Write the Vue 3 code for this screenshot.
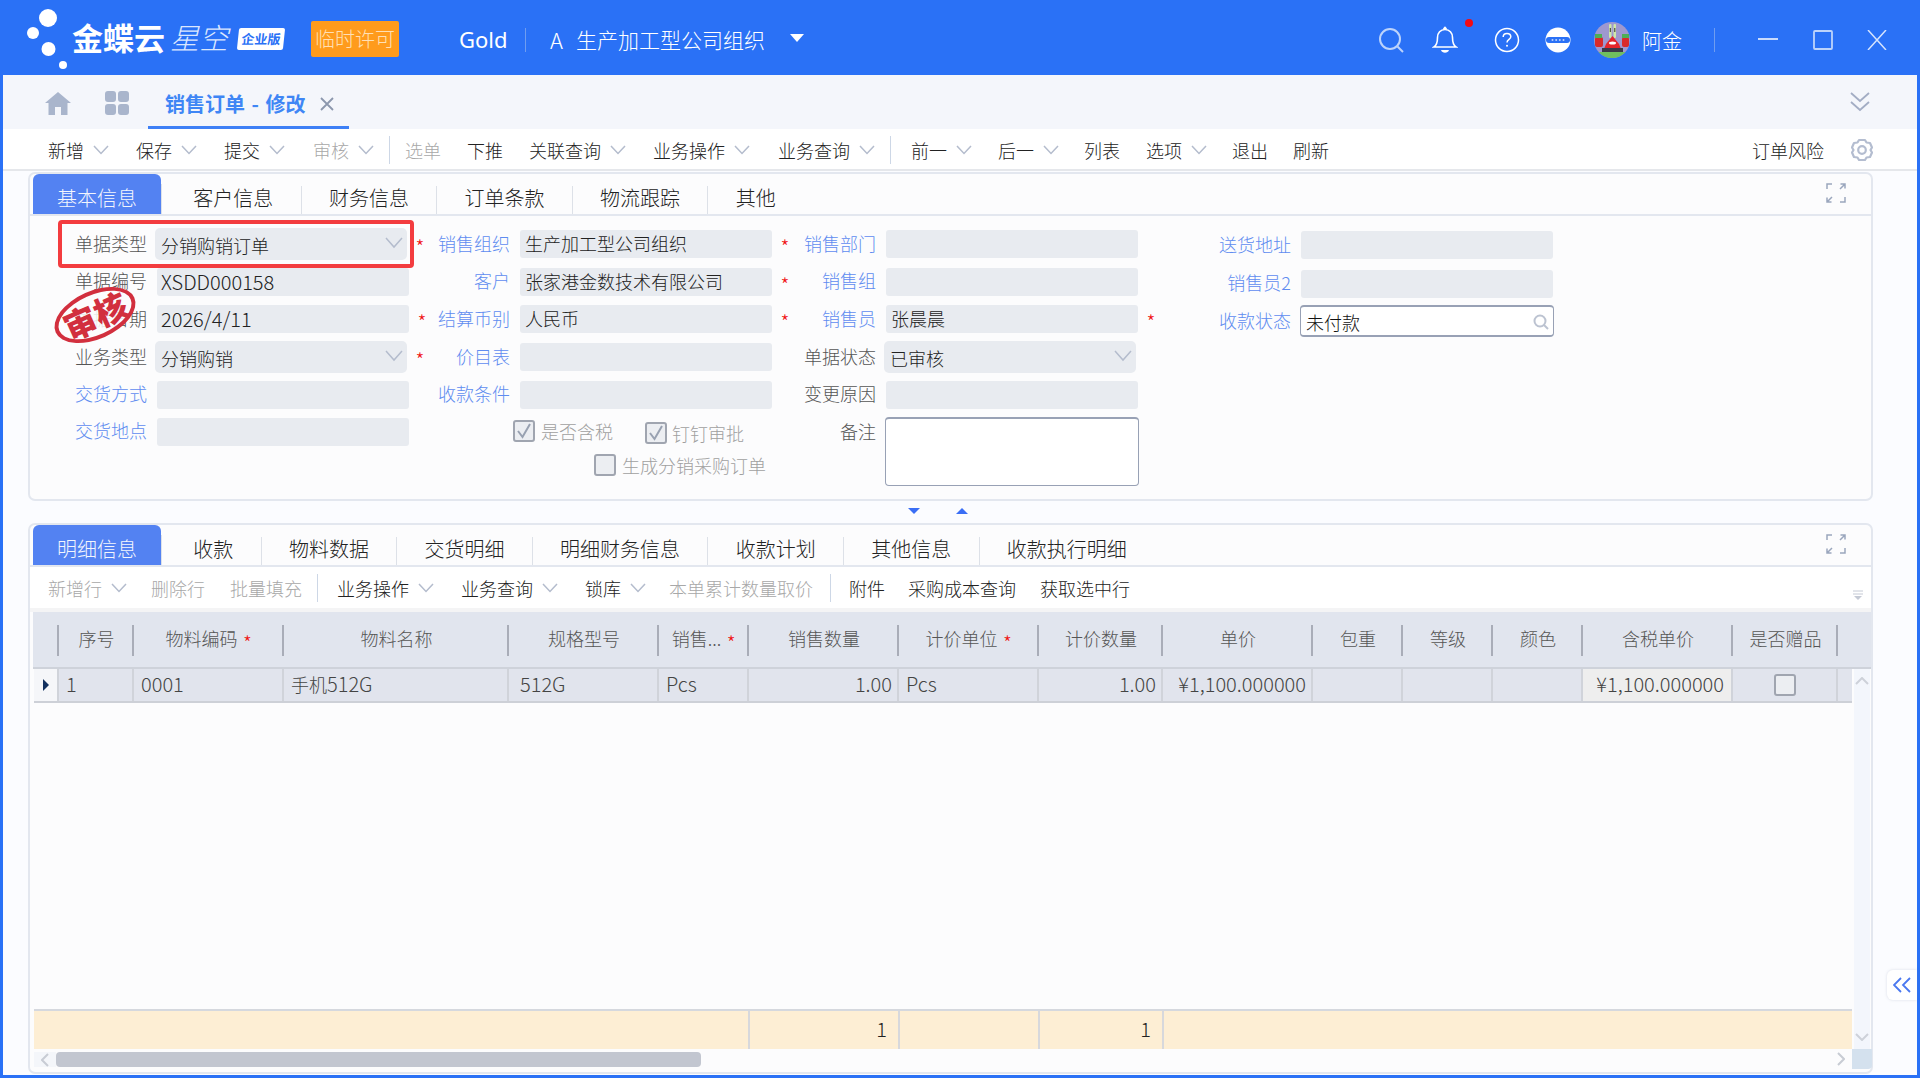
<template>
  <div class="page">
    <!-- top blue bar -->
    <header class="topbar">
      <div class="logo">
        <svg class="logo-dots" width="60" height="75" viewBox="0 0 60 75">
          <circle cx="48" cy="18" r="9" fill="#fff" />
          <circle cx="33" cy="33" r="6" fill="#fff" />
          <circle cx="48.500" cy="49" r="7" fill="#fff" />
          <circle cx="63" cy="65" r="4" fill="#fff" />
        </svg>
        <span class="logo-main">金蝶云</span>
        <span class="logo-sub">星空</span>
        <span class="logo-badge"><i>企业版</i></span>
      </div>
      <span class="licence">临时许可</span>
      <span class="tenant">Gold</span>
      <span class="bar-sep"></span>
      <span class="org-a">A</span>
      <span class="org">生产加工型公司组织</span>
      <span class="org-arrow"></span>

      <div class="top-right">
        <svg class="ico-search" width="28" height="28" viewBox="0 0 28 28" fill="none" stroke="#bcd3fb" stroke-width="2">
          <circle cx="13" cy="13" r="10" />
          <path d="M20.500 20.500 L26 26" />
        </svg>
        <span class="bell-wrap">
          <svg width="26" height="28" viewBox="0 0 26 28" fill="none" stroke="#fff" stroke-width="1.600">
            <path d="M2 21 C5 19 5.500 15 5.500 11.500 C5.500 7 8.500 3.500 13 3.500 C17.500 3.500 20.500 7 20.500 11.500 C20.500 15 21 19 24 21 Z" />
            <path d="M11.500 3 L13 1.500 L14.500 3" />
            <path d="M9 24 H17 C16 27.500 10 27.500 9 24 Z" fill="#fff" stroke="none" />
          </svg>
          <i class="dot"></i>
        </span>
        <svg class="ico-help" width="26" height="26" viewBox="0 0 26 26" fill="none" stroke="#fff" stroke-width="1.500">
          <circle cx="13" cy="13" r="11.500" />
          <path d="M9.200 10 C9.200 7.500 11 6.500 13 6.500 C15.200 6.500 16.800 7.800 16.800 9.800 C16.800 12.300 13 12.500 13 15.500" />
          <circle cx="13" cy="18.800" r="1" fill="#fff" stroke="none" />
        </svg>
        <svg class="ico-more" width="26" height="26" viewBox="0 0 26 26">
          <circle cx="13" cy="13" r="12.500" fill="#fff" />
          <rect x="1" y="10" width="24" height="6" rx="3" fill="#2a71f6" />
          <circle cx="7.500" cy="13" r="1" fill="#bcd3fb" />
          <circle cx="11.200" cy="13" r="1" fill="#bcd3fb" />
          <circle cx="14.800" cy="13" r="1" fill="#bcd3fb" />
          <circle cx="18.500" cy="13" r="1" fill="#bcd3fb" />
        </svg>
        <svg class="avatar" width="36" height="36" viewBox="0 0 36 36">
          <defs>
            <clipPath id="av"><circle cx="18" cy="18" r="18" /></clipPath>
          </defs>
          <g clip-path="url(#av)">
            <rect width="36" height="36" fill="#9e98cf" />
            <rect y="30" width="36" height="6" fill="#6fbf5f" />
            <rect x="15" y="2" width="2.500" height="14" rx="1" fill="#cfe8a8" />
            <rect x="19.500" y="2" width="2.500" height="14" rx="1" fill="#cfe8a8" />
            <rect x="15.800" y="6" width="1" height="4" fill="#333" />
            <rect x="20.300" y="6" width="1" height="4" fill="#333" />
            <path d="M18.500 14 L25 22 L27 27 H10 L12 22 Z" fill="#e4262b" />
            <rect x="1" y="15" width="8" height="10" rx="2" fill="#d92a2a" />
            <rect x="28" y="15" width="7" height="10" rx="2" fill="#d92a2a" />
            <rect x="1" y="12" width="7" height="4" fill="#4fae55" />
            <rect x="28" y="12" width="7" height="4" fill="#4fae55" />
            <rect x="8" y="26" width="21" height="4" fill="#3a3a4a" />
            <ellipse cx="18.500" cy="21" rx="3.500" ry="1.500" fill="#fff" />
          </g>
        </svg>
        <span class="user">阿金</span>
        <span class="bar-sep2"></span>
        <svg class="win-min" width="20" height="20" viewBox="0 0 20 20"><path d="M0 9 H20" stroke="#c9dbfc" stroke-width="2" /></svg>
        <svg class="win-max" width="20" height="20" viewBox="0 0 20 20" fill="none"><rect x="1" y="1" width="18" height="18" rx="1" stroke="#bcd3fb" stroke-width="1.800" /></svg>
        <svg class="win-close" width="20" height="20" viewBox="0 0 20 20"><path d="M1 0 L19 20 M19 0 L1 20" stroke="#d5e3fd" stroke-width="1.500" /></svg>
      </div>
    </header>

    <main class="main">
      <!-- page tabs -->
      <div class="page-tabs">
        <svg class="ico-home" width="26" height="24" viewBox="0 0 26 24"><path d="M13 1 L26 12 H22.500 V24 H16 V16 H10 V24 H3.500 V12 H0 Z" fill="#a9b5cc" /></svg>
        <svg class="ico-apps" width="24" height="24" viewBox="0 0 24 24" fill="#a9b5cc">
          <rect x="0" y="0" width="11" height="11" rx="3" />
          <rect x="13" y="0" width="11" height="11" rx="3" />
          <rect x="0" y="13" width="11" height="11" rx="3" />
          <rect x="13" y="13" width="11" height="11" rx="3" />
        </svg>
        <div class="page-tab">
          <span>销售订单 - 修改</span>
          <svg width="14" height="14" viewBox="0 0 14 14"><path d="M1 1 L13 13 M13 1 L1 13" stroke="#8c97ad" stroke-width="1.800" /></svg>
        </div>
        <svg class="ico-fold" width="20" height="20" viewBox="0 0 20 20" fill="none" stroke="#a3adc4" stroke-width="1.800">
          <path d="M1 1 L10 9 L19 1" />
          <path d="M1 10 L10 18 L19 10" />
        </svg>
      </div>

      <!-- main toolbar -->
      <div class="toolbar main-tools">
        <template v-for="(it, i) in mainTools" :key="i">
          <span v-if="it.sep" class="tool-sep" :style="{ marginRight: it.w + 'px' }"></span>
          <span v-else class="tool" :class="{ off: it.off }" :style="{ width: it.w + 'px' }">
            {{ it.t }}
            <svg v-if="it.menu" class="chev" width="16" height="10" viewBox="0 0 16 10"><path d="M1 1 L8 8.500 L15 1" /></svg>
          </span>
        </template>
        <span class="tool risk">订单风险</span>
        <svg class="ico-gear" width="22" height="24" viewBox="0 0 22 24" fill="none" stroke="#b4bdd0" stroke-width="2.200">
          <path d="M8 2 H14 L15.500 4.500 L19 5 L21 9.500 L19.500 12 L21 14.500 L19 19 L15.500 19.500 L14 22 H8 L6.500 19.500 L3 19 L1 14.500 L2.500 12 L1 9.500 L3 5 L6.500 4.500 Z" stroke-linejoin="round" />
          <circle cx="11" cy="12" r="3.800" />
        </svg>
      </div>

      <!-- header card -->
      <section class="card head-card">
        <div class="tabs">
          <span v-for="(t, i) in headTabs" :key="t" class="tab" :class="{ active: i === 0 }">{{ t }}</span>
          <svg class="ico-expand" width="20" height="20" viewBox="0 0 20 20" fill="none" stroke="#9aa6bd" stroke-width="1.500">
            <path d="M1 6 V1 H6 M14 6 L19 1 M14.500 1 H19 V5.500 M1 14.500 V19 H5.500 M1 19 L6 14 M19 14 V19 H14" />
          </svg>
        </div>
        <div class="form">
          <template v-for="(f, i) in fields" :key="i">
            <div v-if="f.empty" class="cell"></div>
            <div v-else class="cell" :class="[f.col, f.nudge]">
              <label :class="{ link: f.blue }">{{ f.label }}</label>
              <div v-if="f.type === 'select'" class="select">
                <span>{{ f.value }}</span>
                <svg class="chev" width="18" height="12" viewBox="0 0 18 12"><path d="M1 1 L9 10 L17 1" /></svg>
              </div>
              <div v-else-if="f.type === 'search'" class="search-input">
                <span>{{ f.value }}</span>
                <svg width="16" height="16" viewBox="0 0 16 16" fill="none" stroke="#bcc3d1" stroke-width="2">
                  <circle cx="7" cy="7" r="5.500" />
                  <path d="M11 11 L15 15" />
                </svg>
              </div>
              <div v-else class="input" :class="{ lat: f.lat }">{{ f.value }}</div>
              <i v-if="f.star" class="star">*</i>
            </div>
          </template>

          <!-- last row: delivery place, checkboxes, remark -->
          <div class="cell col1 last">
            <label class="link">交货地点</label>
            <div class="input"></div>
          </div>
          <div class="checks">
            <div class="check-row">
              <span class="check on">
                <svg width="14" height="16" viewBox="0 0 14 16" fill="none" stroke="#98a1b1" stroke-width="2"><path d="M1 8 L5.500 14 L13 1" /></svg>
              </span>
              <span class="check-label">是否含税</span>
              <span class="check on low">
                <svg width="14" height="16" viewBox="0 0 14 16" fill="none" stroke="#98a1b1" stroke-width="2"><path d="M1 8 L5.500 14 L13 1" /></svg>
              </span>
              <span class="check-label low">钉钉审批</span>
            </div>
            <div class="check-row second">
              <span class="check"></span>
              <span class="check-label">生成分销采购订单</span>
            </div>
          </div>
          <div class="remark">
            <label>备注</label>
            <div class="textarea"></div>
          </div>

          <!-- things lying over the form -->
          <div class="highlight"></div>
          <div class="stamp"><span>审核</span></div>
        </div>
      </section>

      <div class="splitter">
        <i class="tri down"></i>
        <i class="tri up"></i>
      </div>

      <!-- detail card -->
      <section class="card detail-card">
        <div class="tabs">
          <span v-for="(t, i) in detailTabs" :key="t" class="tab" :class="{ active: i === 0 }">{{ t }}</span>
          <svg class="ico-expand" width="20" height="20" viewBox="0 0 20 20" fill="none" stroke="#9aa6bd" stroke-width="1.500">
            <path d="M1 6 V1 H6 M14 6 L19 1 M14.500 1 H19 V5.500 M1 14.500 V19 H5.500 M1 19 L6 14 M19 14 V19 H14" />
          </svg>
        </div>
        <div class="toolbar sub">
          <template v-for="(it, i) in subTools" :key="i">
            <span v-if="it.sep" class="tool-sep" :style="{ marginRight: it.w + 'px' }"></span>
            <span v-else class="tool" :class="{ off: it.off }" :style="{ width: it.w + 'px' }">
              {{ it.t }}
              <svg v-if="it.menu" class="chev" width="16" height="10" viewBox="0 0 16 10"><path d="M1 1 L8 8.500 L15 1" /></svg>
            </span>
          </template>
          <svg class="ico-more-down" width="10" height="10" viewBox="0 0 10 10">
            <path d="M0 1 H10 M0 4 H10" stroke="#c5cad5" stroke-width="1" />
            <path d="M1 6 H9 L5 10 Z" fill="#c5cad5" />
          </svg>
        </div>

        <div class="grid-head">
          <div v-for="(c, i) in columns" :key="i" class="th">
            <span>{{ c.t }}</span><i v-if="c.star" class="star">*</i>
          </div>
        </div>

        <div class="grid-body">
          <div class="grid-main">
            <div class="grid-row">
              <div class="td marker"><i></i></div>
              <div class="td lat">1</div>
              <div class="td lat">0001</div>
              <div class="td">手机<span class="lat">512G</span></div>
              <div class="td spec lat">512G</div>
              <div class="td lat">Pcs</div>
              <div class="td num lat">1.00</div>
              <div class="td lat">Pcs</div>
              <div class="td num lat">1.00</div>
              <div class="td num lat">¥1,100.000000</div>
              <div class="td"></div>
              <div class="td"></div>
              <div class="td"></div>
              <div class="td num tax lat">¥1,100.000000</div>
              <div class="td center"><span class="check"></span></div>
              <div class="td"></div>
            </div>
            <div class="grid-empty"></div>
            <div class="grid-foot">
              <div></div>
              <div class="lat">1</div>
              <div></div>
              <div class="lat">1</div>
              <div></div>
            </div>
            <div class="hscroll">
              <span class="hs-arrow">
                <svg width="8" height="14" viewBox="0 0 8 14" fill="none" stroke="#c8ccd4" stroke-width="2"><path d="M7 1 L1 7 L7 13" /></svg>
              </span>
              <span class="hs-thumb"></span>
              <svg class="hs-right" width="8" height="14" viewBox="0 0 8 14" fill="none" stroke="#c8ccd4" stroke-width="2"><path d="M1 1 L7 7 L1 13" /></svg>
            </div>
          </div>
          <div class="vscroll">
            <div class="vs-track">
              <svg width="14" height="8" viewBox="0 0 14 8" fill="none" stroke="#cdd1d9" stroke-width="2"><path d="M1 7 L7 1 L13 7" /></svg>
              <svg width="14" height="8" viewBox="0 0 14 8" fill="none" stroke="#cdd1d9" stroke-width="2"><path d="M1 1 L7 7 L13 1" /></svg>
            </div>
            <div class="vs-corner"></div>
          </div>
        </div>
      </section>

      <!-- side drawer handle -->
      <div class="side-handle">
        <svg width="18" height="16" viewBox="0 0 18 16" fill="none" stroke="#4a78f0" stroke-width="1.800">
          <path d="M8 1 L1 8 L8 15" />
          <path d="M17 1 L10 8 L17 15" />
        </svg>
      </div>
    </main>
  </div>
</template>

<script setup>
// 工具栏: w 是每一项占的宽度
const mainTools = [
  { t: '新增', menu: true, w: 88 },
  { t: '保存', menu: true, w: 88 },
  { t: '提交', menu: true, w: 89 },
  { t: '审核', menu: true, off: true, w: 76 },
  { sep: true, w: 15 },
  { t: '选单', off: true, w: 62 },
  { t: '下推', w: 62 },
  { t: '关联查询', menu: true, w: 124 },
  { t: '业务操作', menu: true, w: 125 },
  { t: '业务查询', menu: true, w: 112 },
  { sep: true, w: 20 },
  { t: '前一', menu: true, w: 87 },
  { t: '后一', menu: true, w: 86 },
  { t: '列表', w: 62 },
  { t: '选项', menu: true, w: 86 },
  { t: '退出', w: 61 },
  { t: '刷新', w: 60 }
]

const subTools = [
  { t: '新增行', menu: true, off: true, w: 103 },
  { t: '删除行', off: true, w: 79 },
  { t: '批量填充', off: true, w: 87 },
  { sep: true, w: 19 },
  { t: '业务操作', menu: true, w: 124 },
  { t: '业务查询', menu: true, w: 124 },
  { t: '锁库', menu: true, w: 84 },
  { t: '本单累计数量取价', off: true, w: 161 },
  { sep: true, w: 18 },
  { t: '附件', w: 59 },
  { t: '采购成本查询', w: 132 },
  { t: '获取选中行', w: 100 }
]

const headTabs = ['基本信息', '客户信息', '财务信息', '订单条款', '物流跟踪', '其他']
const detailTabs = ['明细信息', '收款', '物料数据', '交货明细', '明细财务信息', '收款计划', '其他信息', '收款执行明细']

// 表单按行排列, 每行四列
const fields = [
  { col: 'col1', label: '单据类型', value: '分销购销订单', type: 'select', star: true },
  { col: 'col2', label: '销售组织', value: '生产加工型公司组织', blue: true, star: true },
  { col: 'col3', label: '销售部门', value: '', blue: true },
  { col: 'col4', label: '送货地址', value: '', blue: true, nudge: 'n1' },

  { col: 'col1', label: '单据编号', value: 'XSDD000158', lat: true },
  { col: 'col2', label: '客户', value: '张家港金数技术有限公司', blue: true, star: true },
  { col: 'col3', label: '销售组', value: '', blue: true },
  { col: 'col4', label: '销售员2', value: '', blue: true, nudge: 'n2' },

  { col: 'col1', label: '单据日期', value: '2026/4/11', lat: true, star: true },
  { col: 'col2', label: '结算币别', value: '人民币', blue: true, star: true },
  { col: 'col3', label: '销售员', value: '张晨晨', blue: true, star: true },
  { col: 'col4', label: '收款状态', value: '未付款', blue: true, type: 'search', nudge: 'n2' },

  { col: 'col1', label: '业务类型', value: '分销购销', type: 'select', star: true },
  { col: 'col2', label: '价目表', value: '', blue: true },
  { col: 'col3', label: '单据状态', value: '已审核', type: 'select' },
  { empty: true },

  { col: 'col1', label: '交货方式', value: '', blue: true },
  { col: 'col2', label: '收款条件', value: '', blue: true },
  { col: 'col3', label: '变更原因', value: '' },
  { empty: true }
]

const columns = [
  { t: '' },
  { t: '序号' },
  { t: '物料编码', star: true },
  { t: '物料名称' },
  { t: '规格型号' },
  { t: '销售...', star: true },
  { t: '销售数量' },
  { t: '计价单位', star: true },
  { t: '计价数量' },
  { t: '单价' },
  { t: '包重' },
  { t: '等级' },
  { t: '颜色' },
  { t: '含税单价' },
  { t: '是否赠品' },
  { t: '' }
]
</script>

<style>
html,
body {
  margin: 0;
  background: #2a71f6;
}
</style>

<style scoped>
.page {
  width: 1920px;
  height: 1078px;
  box-sizing: border-box;
  padding: 0 3px 3px;
  background: #2a71f6;
  font-family: "Noto Sans CJK SC", "Noto Sans", sans-serif;
  font-weight: 300;
  font-size: 18px;
  color: #333;
  display: flex;
  flex-direction: column;
  overflow: hidden;
}
i {
  font-style: normal;
}
.lat {
  font-size: 20px;
}

/* 顶部 */
.topbar {
  height: 75px;
  flex: none;
  margin: 0 -3px;
  display: flex;
  align-items: center;
  color: #fff;
}
.logo {
  width: 311px;
  height: 75px;
  display: flex;
  align-items: center;
  flex: none;
}
.logo-dots {
  flex: none;
  margin-right: 12px;
  overflow: visible;
}
.logo-main {
  font-size: 31px;
  font-weight: 700;
  line-height: 1;
  margin-top: -2px;
  width: 98px;
  white-space: nowrap;
}
.logo-sub {
  font-size: 29px;
  line-height: 1;
  margin-top: -2px;
  width: 68px;
  color: #dbe7ff;
  font-style: italic;
  white-space: nowrap;
}
.logo-badge {
  width: 46px;
  height: 22px;
  background: #fff;
  transform: skewX(-6deg);
  border-radius: 2px;
  color: #2a71f6;
  font-size: 13px;
  font-weight: 700;
  line-height: 22px;
  text-align: center;
  white-space: nowrap;
  margin-top: 2px;
}
.licence {
  width: 88px;
  height: 36px;
  background: #ff9b1c;
  border-radius: 2px;
  color: #ffe0b5;
  font-size: 20px;
  line-height: 36px;
  text-align: center;
  margin-top: 3px;
  flex: none;
}
.tenant {
  margin-left: 60px;
  font-size: 22px;
  width: 66px;
  font-family: "Noto Sans", sans-serif;
  font-weight: 400;
  margin-top: 2px;
}
.bar-sep {
  width: 1px;
  height: 24px;
  background: #6f9df0;
  margin-top: 4px;
}
.org-a {
  margin-left: 24px;
  font-size: 22px;
  width: 26px;
  margin-top: 2px;
}
.org {
  font-size: 21px;
  margin-top: 2px;
  white-space: nowrap;
}
.org-arrow {
  margin-left: 25px;
  margin-top: 0;
  border-left: 7px solid transparent;
  border-right: 7px solid transparent;
  border-top: 8px solid #fff;
}
.top-right {
  margin-left: auto;
  display: flex;
  align-items: center;
  height: 75px;
  padding-top: 5px;
  box-sizing: border-box;
  padding-right: 33px;
}
.ico-search {
  margin-right: 27px;
}
.bell-wrap {
  position: relative;
  display: flex;
  margin-right: 36px;
}
.dot {
  position: absolute;
  left: 33px;
  top: -7px;
  width: 8px;
  height: 8px;
  border-radius: 50%;
  background: #f40a12;
}
.ico-help {
  margin-right: 25px;
}
.ico-more {
  margin-right: 23px;
}
.user {
  margin-left: 12px;
  font-size: 20px;
  width: 41px;
  white-space: nowrap;
}
.avatar {
  flex: none;
}
.bar-sep2 {
  width: 1px;
  height: 24px;
  margin-left: 31px;
  margin-right: 43px;
  background: #6f9df0;
}
.win-max {
  margin-left: 35px;
}
.win-close {
  margin-left: 34px;
}

/* 主区域 */
.main {
  flex: 1;
  min-height: 0;
  position: relative;
  background: #fbfcff;
  display: flex;
  flex-direction: column;
}
.page-tabs {
  height: 54px;
  flex: none;
  background: #f4f6fb;
  display: flex;
  align-items: center;
}
.ico-home {
  margin-left: 42px;
  margin-top: 2px;
  flex: none;
}
.ico-apps {
  margin-left: 34px;
  margin-top: 2px;
  flex: none;
}
.page-tab {
  margin-left: 19px;
  width: 201px;
  height: 54px;
  box-sizing: border-box;
  border-bottom: 3px solid #3e80f6;
  padding: 6px 0 0 17px;
  display: flex;
  align-items: center;
  color: #3f86f5;
  font-size: 20px;
  font-weight: 700;
  word-spacing: 2px;
  white-space: nowrap;
}
.page-tab svg {
  margin-left: 15px;
}
.ico-fold {
  margin-left: auto;
  margin-right: 47px;
  margin-top: 0;
}

/* 工具栏 */
.toolbar {
  height: 40px;
  flex: none;
  background: #fff;
  border-bottom: 2px solid #e5e7eb;
  box-sizing: content-box;
  padding-left: 45px;
  display: flex;
  align-items: center;
  padding-right: 44px;
  white-space: nowrap;
}
.main-tools {
  height: 38px;
  padding-top: 2px;
}
.tool {
  display: flex;
  align-items: center;
  flex: none;
  color: #222;
}
.tool.off {
  color: #a8a8a8;
}
.chev {
  margin-left: 9px;
  fill: none;
  stroke: #b4bccd;
  stroke-width: 1.500;
  flex: none;
}
.tool-sep {
  width: 1px;
  height: 28px;
  background: #cdd7e6;
  flex: none;
}
.risk {
  margin-left: auto;
}
.ico-gear {
  margin-left: 27px;
}

/* 卡片 */
.card {
  margin: 1px 44px 0 25px;
  flex: none;
  box-sizing: border-box;
  background: #fcfcfd;
  border: 2px solid #e3e7ef;
  border-radius: 7px;
}
.head-card {
  height: 329px;
}
.detail-card {
  height: 551px;
  margin-top: 0;
  display: flex;
  flex-direction: column;
}
.tabs {
  height: 42px;
  box-sizing: border-box;
  padding: 2px 0 0 3px;
  flex: none;
  display: flex;
  align-items: flex-end;
  border-bottom: 2px solid #e3e7ef;
  position: relative;
}
.tab {
  height: 38px;
  line-height: 43px;
  padding: 0 27.3px;
  font-size: 20px;
  color: #222;
  flex: none;
  position: relative;
  margin-left: 1px;
  white-space: nowrap;
}
.tab::after {
  content: "";
  position: absolute;
  right: -1px;
  top: 10px;
  bottom: 0;
  width: 1px;
  background: #dde1e8;
}
.tab:last-of-type::after {
  display: none;
}
.tab.active {
  height: 40px;
  line-height: 47px;
  width: 128px;
  padding: 0;
  margin-left: 0;
  margin-right: 4px;
  box-sizing: border-box;
  text-align: center;
  color: #f2f5fd;
  background: #5382f2;
  border-radius: 6px 6px 0 0;
}
.ico-expand {
  position: absolute;
  right: 25px;
  top: 9px;
}

/* 表单 */
.form {
  position: relative;
  height: 281px;
  display: grid;
  grid-template-columns: 408px 366px 415px 1fr;
  grid-template-rows: 38px 37px 38px 38px 37px 1fr;
  padding-top: 9px;
  box-sizing: border-box;
}
.cell {
  display: flex;
  align-items: center;
  min-width: 0;
}
.cell label,
.remark label {
  width: 72px;
  flex: none;
  text-align: right;
  color: #555;
  white-space: nowrap;
}
.cell label {
  margin-bottom: 3px;
}
.cell.col1 label {
  width: 117px;
}
.cell label.link {
  color: #5f8cf0;
}
.input {
  width: 252px;
  height: 28px;
  line-height: 27px;
  flex: none;
  box-sizing: border-box;
  margin-left: 10px;
  padding-left: 5px;
  background: #e8ebf0;
  border-radius: 3px;
  color: #222;
  white-space: nowrap;
}
.input.lat {
  padding-left: 4px;
}
.select {
  width: 252px;
  height: 32px;
  flex: none;
  box-sizing: border-box;
  margin: 0 2px 0 8px;
  padding: 2px 4px 0 6px;
  background: #e8ebf0;
  border-radius: 5px;
  color: #222;
  display: flex;
  justify-content: space-between;
  align-items: center;
  white-space: nowrap;
}
.select .chev {
  margin-top: -4px;
}
.search-input {
  width: 254px;
  height: 32px;
  flex: none;
  box-sizing: border-box;
  margin-left: 9px;
  padding: 2px 4px 0 5px;
  background: #fff;
  border: 2px solid #98a1b5;
  border-width: 2px 1px;
  border-radius: 4px;
  color: #111;
  display: flex;
  justify-content: space-between;
  align-items: center;
}
.star {
  color: #f01010;
  font-style: normal;
  font-size: 20px;
  line-height: 20px;
  height: 14px;
  width: 12px;
  text-align: center;
  margin-left: 7px;
  flex: none;
}
.select + .star {
  margin-left: 5px;
}
.n1 {
  padding-top: 2px;
}
.n2 {
  padding-top: 4px;
}
.last {
  align-self: start;
  padding-top: 4px;
}
.checks {
  grid-column: 2;
  padding-left: 75px;
  color: #a0a0a0;
}
.check-row {
  display: flex;
  align-items: flex-start;
  padding-top: 7px;
  height: 31px;
  box-sizing: border-box;
}
.check-row.second {
  padding-left: 81px;
  padding-top: 10px;
}
.check {
  display: inline-flex;
  align-items: center;
  justify-content: center;
  width: 22px;
  height: 22px;
  box-sizing: border-box;
  background: #eceef2;
  border: 2px solid #a0a5b0;
  border-radius: 3px;
  flex: none;
}
.check.low {
  margin-top: 2px;
}
.check-label {
  margin-left: 6px;
  line-height: 22px;
  white-space: nowrap;
}
.check-label + .check {
  margin-left: 32px;
}
.check-label.low {
  margin-top: 2px;
  margin-left: 5px;
}
.remark {
  grid-column: 3;
  display: flex;
  align-items: flex-start;
  padding-top: 4px;
}
.remark label {
  margin-top: 1px;
}
.textarea {
  width: 254px;
  height: 69px;
  flex: none;
  margin-left: 9px;
  box-sizing: border-box;
  background: #fff;
  border: 1px solid #98a1b5;
  border-top-width: 2px;
  border-radius: 4px;
}
.highlight {
  position: absolute;
  left: 28px;
  top: 4px;
  width: 356px;
  height: 48px;
  box-sizing: border-box;
  border: 4px solid #f33c3f;
  border-radius: 4px;
  pointer-events: none;
}
.stamp {
  position: absolute;
  left: 22px;
  top: 75px;
  width: 86px;
  height: 48px;
  box-sizing: border-box;
  border: 4px solid #d22f3e;
  border-radius: 50%;
  transform: rotate(-24deg);
  background: rgba(252, 252, 253, 0.88);
  color: #d22f3e;
  display: flex;
  align-items: center;
  justify-content: center;
  font-size: 33px;
  font-weight: 900;
  line-height: 1;
  white-space: nowrap;
}

/* 分隔条 */
.splitter {
  height: 22px;
  flex: none;
  display: flex;
  align-items: center;
  padding-left: 905px;
}
.tri {
  border-left: 6px solid transparent;
  border-right: 6px solid transparent;
  margin-right: 36px;
  margin-bottom: 3px;
}
.tri.down {
  border-top: 6px solid #3a6ef5;
}
.tri.up {
  border-bottom: 6px solid #3a6ef5;
}

/* 明细工具栏 */
.toolbar.sub {
  height: 41px;
  padding: 0 8px 0 18px;
  margin-left: 0;
  border-bottom: 4px solid #f4f4f5;
  position: relative;
}
.ico-more-down {
  margin-left: auto;
  margin-top: 14px;
}

/* 表格 */
.grid-head,
.grid-row {
  display: grid;
  grid-template-columns: 25px 75px 150px 225px 150px 90px 150px 140px 124px 150px 90px 90px 90px 150px 105px 14px;
}
.grid-head {
  flex: none;
  margin-left: 3px;
  padding-left: 1px;
  height: 57px;
  box-sizing: border-box;
  background: #e1e5ee;
  border-bottom: 2px solid #ced2da;
  padding-top: 13px;
  padding-bottom: 12px;
}
.th {
  display: flex;
  align-items: center;
  justify-content: center;
  color: #555;
  border-right: 2px solid #a9adb8;
  padding: 0 0 5px 2px;
  white-space: nowrap;
}
.th .star {
  margin-left: 5px;
  margin-top: 4px;
  width: 10px;
}
.th:last-child {
  border-right: 0;
}
.grid-body {
  flex: 1;
  min-height: 0;
  margin-left: 4px;
  display: flex;
}
.grid-main {
  width: 1818px;
  flex: none;
  display: flex;
  flex-direction: column;
}
.grid-row {
  height: 34px;
  flex: none;
  box-sizing: border-box;
  background: #e1e4ed;
  border-bottom: 2px solid #cdd0d7;
}
.td {
  padding: 0 7px;
  line-height: 30px;
  color: #444;
  border-right: 2px solid #d0d3da;
  white-space: nowrap;
  overflow: visible;
  box-sizing: border-box;
}
.td:last-child {
  border-right: 0;
}
.td.spec {
  padding-left: 11px;
}
.td.num {
  text-align: right;
  padding-right: 5px;
}
.td.tax {
  background: #eeeeee;
  padding-right: 7px;
}
.td.center {
  display: flex;
  align-items: center;
  justify-content: center;
}
.marker {
  padding: 0;
  display: flex;
  align-items: center;
  justify-content: center;
  background: #f5f6f9;
}
.marker i {
  border-top: 6px solid transparent;
  border-bottom: 6px solid transparent;
  border-left: 6px solid #12305f;
}
.grid-empty {
  flex: 1;
}
.grid-foot {
  height: 40px;
  flex: none;
  box-sizing: border-box;
  display: grid;
  grid-template-columns: 716px 150px 140px 124px 1fr;
  background: #fdeed4;
  border-top: 2px solid #d5d8de;
  line-height: 36px;
  color: #222;
}
.grid-foot > div {
  border-right: 2px solid #d7d8dc;
  text-align: right;
  padding-right: 11px;
}
.grid-foot > div:last-child {
  border-right: 0;
}
.hscroll {
  height: 23px;
  flex: none;
  display: flex;
  align-items: flex-start;
  padding-top: 3px;
  box-sizing: border-box;
}
.hs-arrow {
  width: 22px;
  height: 15px;
  background: #f4f6fa;
  display: flex;
  align-items: center;
  justify-content: center;
  flex: none;
}
.hs-thumb {
  width: 645px;
  height: 15px;
  background: #c2c6d0;
  border-radius: 4px;
  flex: none;
}
.hs-right {
  margin-left: auto;
  margin-right: 7px;
}
.vscroll {
  width: 20px;
  flex: none;
  display: flex;
  flex-direction: column;
}
.vs-track {
  flex: 1;
  margin: 0 2px;
  background: #f3f6fc;
  display: flex;
  flex-direction: column;
  justify-content: space-between;
  align-items: center;
  padding: 8px 0;
}
.vs-corner {
  height: 20px;
  margin-bottom: 3px;
  flex: none;
  background: #d4e1ee;
  border-radius: 0 0 4px 0;
}

/* 右侧把手 */
.side-handle {
  position: absolute;
  right: 0;
  top: 895px;
  width: 30px;
  height: 30px;
  background: #fff;
  border-radius: 6px 0 0 6px;
  box-shadow: 0 0 3px rgba(120, 130, 160, 0.25);
  display: flex;
  align-items: center;
  justify-content: center;
}
</style>
